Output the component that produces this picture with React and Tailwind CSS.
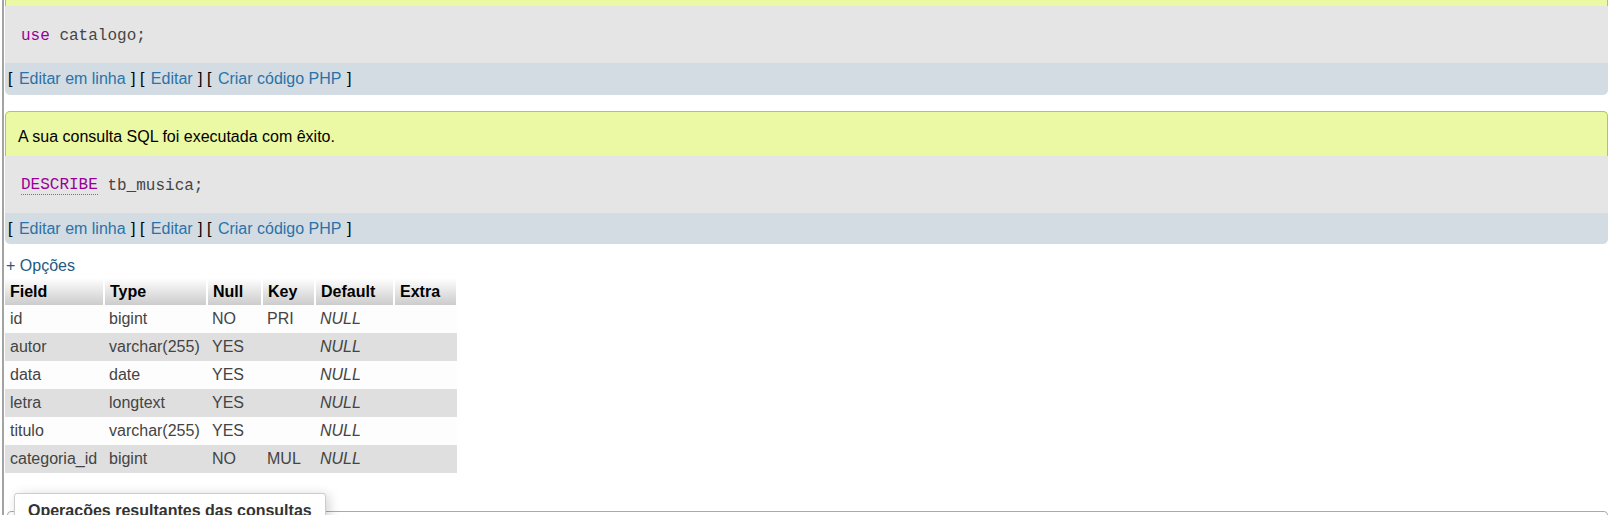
import React from "react"

const ROWS = [
  { field: "id", type: "bigint", nul: "NO", key: "PRI" },
  { field: "autor", type: "varchar(255)", nul: "YES", key: "" },
  { field: "data", type: "date", nul: "YES", key: "" },
  { field: "letra", type: "longtext", nul: "YES", key: "" },
  { field: "titulo", type: "varchar(255)", nul: "YES", key: "" },
  { field: "categoria_id", type: "bigint", nul: "NO", key: "MUL" },
]

function LinkBar({ tall }) {
  return (
    <div className={"bg-[#d3dce3] rounded-b-[5px] pl-[3px] text-black whitespace-nowrap " + (tall ? "h-[32px] leading-[32px]" : "h-[31px] leading-[31px]")}>
      [ <a className="text-[#2b72a8] ml-[2px] mr-[1px]">Editar em linha</a> ] [ <a className="text-[#2b72a8] ml-[2px] mr-[1px]">Editar</a> ] [ <a className="text-[#2b72a8] ml-[2px] mr-[1px]">Criar código PHP</a> ]
    </div>
  )
}

function CodeBox({ children }) {
  return (
    <div className="bg-[#e5e5e5] h-[57px] flex items-center pl-[16px] pt-[3px] font-['Liberation_Mono','Courier_New',monospace] text-[16px] text-[#444]">
      {children}
    </div>
  )
}

export default function App() {
  return (
    <div className="h-[515px] overflow-hidden bg-white font-['Liberation_Sans',Arial,sans-serif] text-[16px]">
      <div className="ml-[2px] h-full border-l-2 border-[#a3a3a3] pl-[1px] pr-[7px]">
        {/* previous query (cut off) */}
        <div>
          <div className="h-[6px] bg-[#ebf8a4] border-x border-[#a2d246]" />
          <CodeBox>
            <span className="text-[#990099]">use</span>&nbsp;catalogo;
          </CodeBox>
          <LinkBar tall />
        </div>

        {/* describe query */}
        <div className="mt-[16px]">
          <div className="h-[45px] bg-[#ebf8a4] border-x border-t border-[#a2d246] rounded-t-[5px] flex items-center pl-[12px] pt-[6px] text-black">
            A sua consulta SQL foi executada com êxito.
          </div>
          <CodeBox>
            <span className="text-[#990099] border-b border-dotted border-[#777] leading-[17px]">DESCRIBE</span>&nbsp;tb_musica;
          </CodeBox>
          <LinkBar />
        </div>

        <div className="mt-[12px] h-[20px] leading-[20px] pl-[1px] text-[#235a81]">+ Opções</div>

        <table className="mt-[2px] table-fixed border-collapse text-[#444]">
          <colgroup>
            <col className="w-[99px]" />
            <col className="w-[103px]" />
            <col className="w-[55px]" />
            <col className="w-[53px]" />
            <col className="w-[79px]" />
            <col className="w-[63px]" />
          </colgroup>
          <thead>
            <tr className="h-[27px]">
              {["Field", "Type", "Null", "Key", "Default", "Extra"].map(h => (
                <th key={h} className="text-left font-bold text-black px-[5px] py-0 border-r-2 border-white bg-gradient-to-b from-white to-[#cccccc]">
                  {h}
                </th>
              ))}
            </tr>
          </thead>
          <tbody>
            {ROWS.map((r, i) => (
              <tr key={r.field} className={"h-[28px] " + (i % 2 ? "bg-[#dfdfdf]" : "bg-[#fdfdfd]")}>
                <td className="px-[5px] whitespace-nowrap">{r.field}</td>
                <td className="px-[5px] whitespace-nowrap">{r.type}</td>
                <td className="px-[5px]">{r.nul}</td>
                <td className="px-[5px]">{r.key}</td>
                <td className="px-[5px] italic">NULL</td>
                <td className="px-[5px]"></td>
              </tr>
            ))}
          </tbody>
        </table>

        <fieldset className="mt-[20px] ml-[2px] border border-[#aaa] rounded-[4px] pl-[6px] h-[200px]">
          <legend className="bg-white border border-[#cccccc] rounded-t-[3px] px-[13px] pt-[8px] pb-[8px] leading-[18px] font-bold text-[#333] shadow-[3px_2px_12px_rgba(0,0,0,0.18)]">
            Operações resultantes das consultas
          </legend>
        </fieldset>
      </div>
    </div>
  )
}
